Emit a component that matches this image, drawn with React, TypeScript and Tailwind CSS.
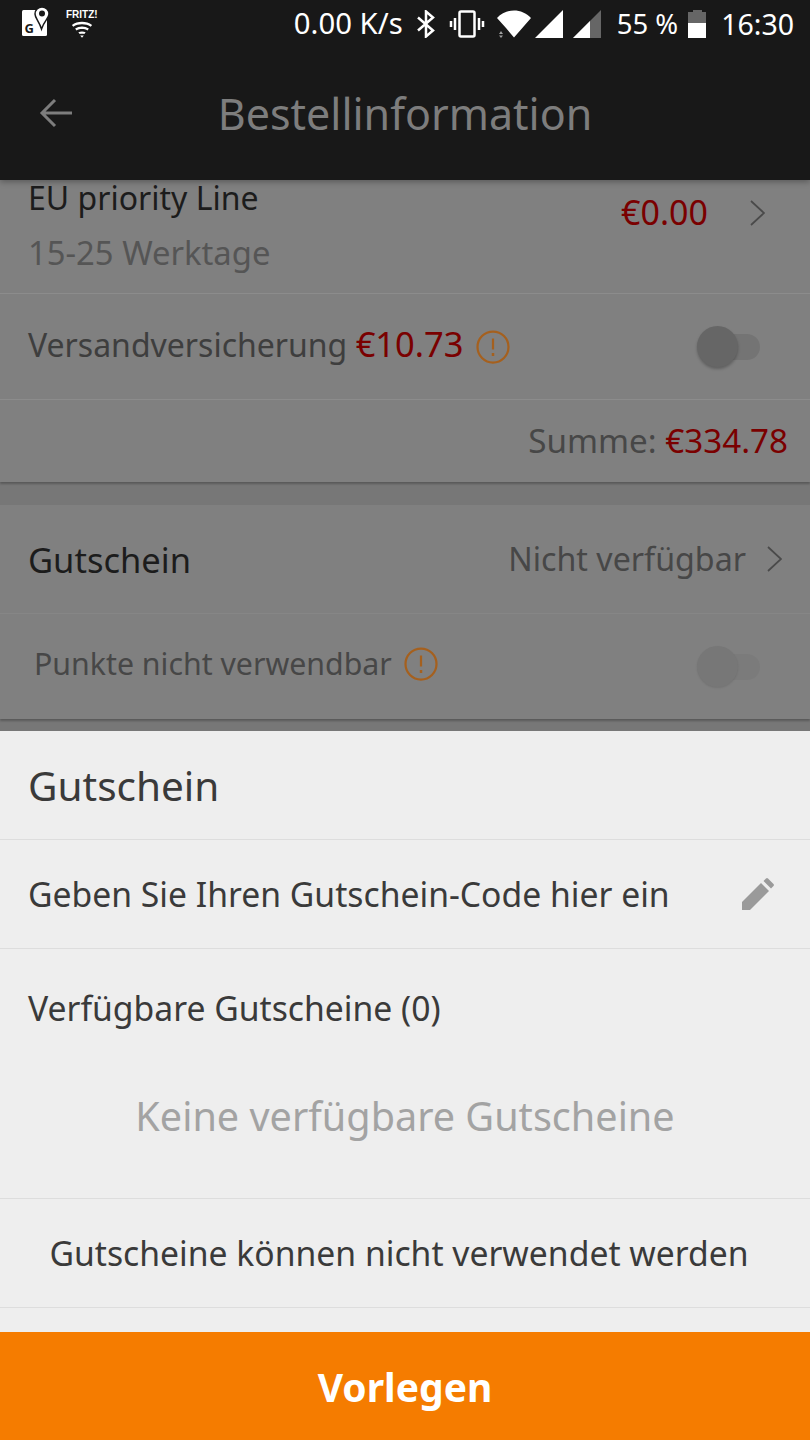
import React from 'react';

const font = "font-['Noto_Sans',sans-serif]";

const MapsIcon = () => (
    <svg width="28" height="30" viewBox="0 0 28 30" className="ml-[22px] mb-[4px]">
        <rect x="0" y="3" width="25" height="26" rx="1.500" fill="#fff" />
        <path d="M20 0a7 7 0 0 0-7 7c0 4 4 7 6.500 15C22 14 27 11 27 7a7 7 0 0 0-7-7Z" fill="#fff" stroke="#181818" strokeWidth="1.500" />
        <circle cx="20" cy="6.500" r="3" fill="#181818" />
        <text x="2.500" y="26" fontSize="13" fontWeight="700" fill="#181818" fontFamily="Noto Sans">G</text>
    </svg>
);

const FritzIcon = () => (
    <div className="ml-[16px] flex flex-col items-center mt-[-2px]">
        <span className="text-[10px] leading-[13px] font-bold text-white font-['Liberation_Sans',sans-serif]">FRITZ!</span>
        <svg width="22" height="17" viewBox="0 0 24 18">
            <path d="M1 4C7-.5 17-.5 23 4l-1.500 2C16 2.500 8 2.500 2.500 6Z" fill="#fff" />
            <path d="M4.500 8C9 5 15 5 19.500 8L18 10c-3.500-2-8.500-2-12 0Z" fill="#fff" />
            <path d="M8 12c2.500-1.200 5.500-1.200 8 0l-1.500 2c-1.500-.6-3.500-.6-5 0Z" fill="#fff" />
            <path d="M12 18l-2-2.500h4Z" fill="#fff" />
        </svg>
    </div>
);

const StatusIcons = () => (
    <div className="flex items-center">
        {/* bluetooth */}
        <svg width="20" height="28" viewBox="0 0 20 28" fill="none" stroke="#fff" strokeWidth="2.500">
            <path d="M2 7.500l15 13-7 6V1.500l7 6-15 13" />
        </svg>
        {/* vibrate */}
        <svg width="36" height="28" viewBox="0 0 36 28" fill="none" stroke="#fff" className="ml-[13px]">
            <rect x="10.500" y="1.500" width="15" height="25" rx="1.500" strokeWidth="2.500" />
            <path d="M6 8v12M2 11v6M30 8v12M34 11v6" strokeWidth="2.500" />
        </svg>
        {/* wifi */}
        <svg width="34" height="28" viewBox="0 0 34 28" className="ml-[12px]">
            <path d="M0 8C9-2 25-2 34 8L17 27.500 9 18Z" fill="#fff" />
            <path d="M2 24h4l-2-3ZM2 25.500h4l-2 2.500Z" fill="#a0a0a0" />
        </svg>
        {/* signal */}
        <svg width="28" height="28" viewBox="0 0 28 28" className="ml-[4px]">
            <path d="M28 0V28H0Z" fill="#fff" />
        </svg>
        <svg width="28" height="28" viewBox="0 0 28 28" className="ml-[10px]">
            <path d="M28 0V28H0Z" fill="#666" />
            <path d="M17 11V28H0Z" fill="#fff" />
        </svg>
    </div>
);

const Battery = () => (
    <div className="flex flex-col items-center w-[18px] h-[28px]">
        <div className="w-[9px] h-[2px] bg-[#666]" />
        <div className="w-[18px] h-[11px] bg-[#666]" />
        <div className="w-[18px] h-[15px] bg-white" />
    </div>
);

const Toggle = ({ dim }: { dim?: boolean }) => (
    <div className="flex items-center">
        <div className={`relative z-10 w-[41px] h-[41px] rounded-full ${dim ? 'bg-[#777777] shadow-[0_1px_2px_rgba(0,0,0,0.1)]' : 'bg-[#666666] shadow-[0_2px_3px_rgba(0,0,0,0.25)]'}`} />
        <div className={`w-[42px] h-[26px] rounded-full ml-[-20px] ${dim ? 'bg-[#7b7b7b]' : 'bg-[#747474]'}`} />
    </div>
);

const Info = () => (
    <svg width="34" height="34" viewBox="0 0 34 34" fill="none" stroke="#a5601e" strokeWidth="2.250">
        <circle cx="17" cy="17" r="15.500" />
        <path d="M17 8.500v11" />
        <path d="M17 23v3" strokeWidth="2.500" />
    </svg>
);

const Chevron = () => (
    <svg width="15" height="26" viewBox="0 0 15 26" fill="none" stroke="#4a4a4a" strokeWidth="1.750">
        <path d="M1 1l13 12L1 25" />
    </svg>
);

const App = () => {
    return (
        <div className={`w-[810px] h-[1440px] flex flex-col overflow-hidden ${font}`}>
            {/* Status bar + title */}
            <div className="relative z-10 h-[180px] shrink-0 bg-[#181818] flex flex-col shadow-[0_2px_6px_rgba(0,0,0,0.3)]">
                <div className="h-[48px] flex items-center text-white pr-[16px]">
                    <MapsIcon />
                    <FritzIcon />
                    <span className="ml-auto mr-[13px] text-[29.300px]">0.00 K/s</span>
                    <StatusIcons />
                    <span className="ml-[16px] mr-[10px] text-[27.500px]">55 %</span>
                    <Battery />
                    <span className="ml-[15px] text-[28.500px]">16:30</span>
                </div>
                <div className="relative h-[132px] flex items-center justify-center">
                    <svg width="33" height="30" viewBox="0 0 33 30" fill="none" stroke="#7d7d7d" strokeWidth="3" className="absolute left-[39px] top-[50px]">
                        <path d="M33 15H3M16 2L3 15l13 13" />
                    </svg>
                    <span className="text-[43px] text-[#7d7d7d]">Bestellinformation</span>
                </div>
            </div>

            {/* Dimmed order page */}
            <div className="h-[551px] shrink-0 bg-[#777777] flex flex-col text-[32px]">
                <div className="h-[114px] shrink-0 bg-[#808080] border-b border-[#8c8c8c] pl-[28px] pr-[45px] flex justify-between">
                    <div className="flex flex-col">
                        <span className="text-[#1c1c1c] leading-[38px] mt-[-1px]">EU priority Line</span>
                        <span className="text-[#555555] text-[32.800px] leading-[38px] mt-[17px]">15-25 Werktage</span>
                    </div>
                    <div className="flex items-center gap-[42px] h-[66px]">
                        <span className="text-[#7a0000] text-[34px] mb-[1px]">€0.00</span>
                        <Chevron />
                    </div>
                </div>
                <div className="h-[106px] shrink-0 bg-[#808080] border-b border-[#8c8c8c] pl-[28px] pr-[50px] flex items-center justify-between">
                    <div className="flex items-center gap-[12px]">
                        <span className="text-[#3e3e3e] mb-[6px]">Versandversicherung <span className="text-[#7a0000] text-[34.500px]">€10.73</span></span>
                        <Info />
                    </div>
                    <Toggle />
                </div>
                <div className="h-[82px] shrink-0 bg-[#808080] pr-[22px] flex items-center justify-end shadow-[0_2px_2px_rgba(0,0,0,0.25)]">
                    <span className="text-[#474747] text-[33.200px]">Summe: <span className="text-[#7a0000]">€334.78</span></span>
                </div>
                <div className="h-[23px] shrink-0" />
                <div className="h-[109px] shrink-0 bg-[#808080] border-b border-[#868686] pl-[28px] pr-[28px] flex items-center justify-between">
                    <span className="text-[#1c1c1c] text-[34.500px] mt-[1px]">Gutschein</span>
                    <div className="flex items-center gap-[21px]">
                        <span className="text-[#474747] text-[32.200px]">Nicht verfügbar</span>
                        <Chevron />
                    </div>
                </div>
                <div className="h-[105px] shrink-0 bg-[#808080] pl-[34px] pr-[50px] flex items-center justify-between shadow-[0_2px_2px_rgba(0,0,0,0.25)]">
                    <div className="flex items-center gap-[12px]">
                        <span className="text-[#474747] text-[30.300px] mb-[6px]">Punkte nicht verwendbar</span>
                        <div className="mb-[6px]"><Info /></div>
                    </div>
                    <Toggle dim />
                </div>
            </div>

            {/* Bottom sheet */}
            <div className="h-[601px] shrink-0 bg-[#eeeeee] flex flex-col text-[#3a3a3a] text-[33.700px]">
                <div className="h-[109px] shrink-0 border-b border-[#dddddd] pl-[28px] pt-[2px] flex items-center">
                    <span className="text-[40.500px]">Gutschein</span>
                </div>
                <div className="h-[109px] shrink-0 border-b border-[#dddddd] pl-[28px] pr-[36px] flex items-center justify-between">
                    <span>Geben Sie Ihren Gutschein-Code hier ein</span>
                    <svg width="32" height="32" viewBox="0 0 32 32" fill="#9a9a9a">
                        <path d="M0 32v-8L19 5l8 8L8 32Z" />
                        <path d="M21.500 3l2.500-2.500a1.500 1.500 0 0 1 2 0L31.500 6a1.500 1.500 0 0 1 0 2L29 10.500Z" />
                    </svg>
                </div>
                <div className="h-[250px] shrink-0 border-b border-[#dddddd] flex flex-col">
                    <span className="pl-[28px] mt-[35px] leading-[48px]">Verfügbare Gutscheine (0)</span>
                    <span className="text-center text-[#a3a3a3] text-[39.600px] mt-[60px] leading-[48px]">Keine verfügbare Gutscheine</span>
                </div>
                <div className="h-[109px] shrink-0 border-b border-[#dddddd] pr-[12px] flex items-center justify-center">
                    <span>Gutscheine können nicht verwendet werden</span>
                </div>
            </div>

            {/* Submit */}
            <div className="h-[108px] shrink-0 bg-[#f57c00] pt-[2px] flex items-center justify-center">
                <span className="text-white text-[39px] font-bold">Vorlegen</span>
            </div>
        </div>
    );
};

export default App;
